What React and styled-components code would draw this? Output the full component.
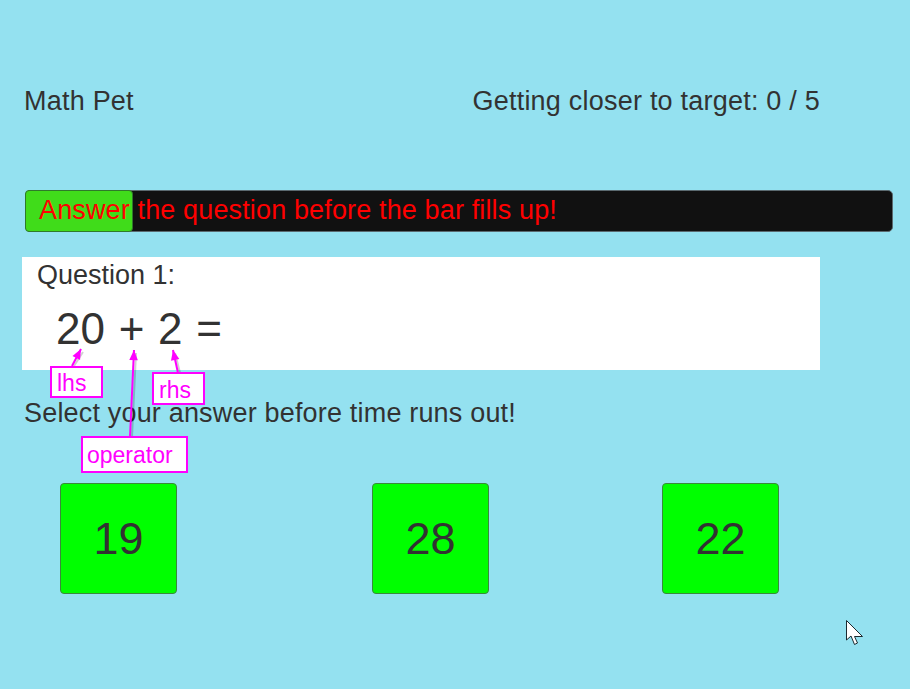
import styled, { createGlobalStyle } from 'styled-components'

const GlobalStyle = createGlobalStyle`
    html, body {
        margin: 0;
        padding: 0;
        background: #94E1F0;
    }
    body {
        font-family: "Liberation Sans", Arial, sans-serif;
        color: #323232;
        overflow: hidden;
    }
`

const Screen = styled.div`
    position: relative;
    width: 910px;
    height: 689px;
    padding-top: 88px;
    box-sizing: border-box;
    background: #94E1F0;
`

const Header = styled.div`
    width: 796px;
    margin-left: 24px;
    display: flex;
    justify-content: space-between;
    font-size: 27px;
    line-height: 27px;
    letter-spacing: 0.22px;
`

const TimerBar = styled.div`
    display: grid;
    width: 868px;
    height: 42px;
    margin: 75px 0 0 25px;
    box-sizing: border-box;
    background: #111111;
    border: 1px solid #5b6a70;
    border-radius: 5px;
`

const TimerFill = styled.div`
    grid-area: 1 / 1;
    box-sizing: border-box;
    background: #40DC1A;
    border: 1px solid #2f7a2a;
    border-radius: 4px;
    margin: -1px 0 0 -1px;
    height: 42px;
`

const TimerText = styled.div`
    grid-area: 1 / 1;
    z-index: 1;
    display: flex;
    align-items: center;
    padding-left: 13px;
    padding-bottom: 3px;
    font-size: 27px;
    letter-spacing: 0.14px;
    color: #FF0000;
    white-space: nowrap;
`

const Stage = styled.div`
    position: relative;
    margin-top: 25px;
`

const QuestionPanel = styled.div`
    width: 798px;
    height: 113px;
    margin-left: 22px;
    box-sizing: border-box;
    padding: 3px 0 0 15px;
    background: #FFFFFF;
`

const QuestionTitle = styled.div`
    font-size: 27px;
    line-height: 30px;
`

const Equation = styled.div`
    margin: 17px 0 0 19px;
    font-size: 44px;
    line-height: 44px;
    word-spacing: 1.5px;
`

const Prompt = styled.div`
    margin: 30px 0 0 24px;
    font-size: 27px;
    line-height: 27px;
    letter-spacing: 0.18px;
`

const AnswerRow = styled.div`
    display: flex;
    margin-top: 56px;
`

const AnswerButton = styled.button`
    width: 117px;
    height: 111px;
    margin-left: ${p => p.offset}px;
    padding: 0;
    box-sizing: border-box;
    background: #00FF00;
    border: 1px solid #3a8a3a;
    border-radius: 4px;
    font-family: "Liberation Sans", Arial, sans-serif;
    font-size: 45px;
    color: #323232;
    cursor: pointer;
`

const Annotations = styled.div`
    position: absolute;
    left: 0;
    top: 0;
    width: 910px;
    height: 230px;
    pointer-events: none;
`

const Label = styled.div`
    position: absolute;
    left: ${p => p.x}px;
    top: ${p => p.y}px;
    width: ${p => p.w}px;
    height: ${p => p.h}px;
    box-sizing: border-box;
    padding: ${p => p.pt}px 0 0 ${p => p.pl}px;
    background: #FFFFFF;
    border: 2px solid #FF00FF;
    color: #FF00FF;
    font-size: 23px;
    line-height: 23px;
`

const ArrowLayer = styled.svg`
    position: absolute;
    left: 0;
    top: 0;
`

const Cursor = styled.svg`
    position: absolute;
    left: 846px;
    top: 620px;
`

const arrows = [
    { x1: 72, y1: 109, x2: 81, y2: 92 },
    { x1: 130, y1: 180, x2: 134, y2: 93 },
    { x1: 178, y1: 116, x2: 173, y2: 93 },
]

const Arrow = ({ x1, y1, x2, y2 }) => {
    const ang = Math.atan2(y2 - y1, x2 - x1)
    const len = 11
    const spread = 0.4
    const ax = x2 - len * Math.cos(ang - spread)
    const ay = y2 - len * Math.sin(ang - spread)
    const bx = x2 - len * Math.cos(ang + spread)
    const by = y2 - len * Math.sin(ang + spread)
    return (
        <g>
            <line x1={x1 + 2} y1={y1} x2={x2 + 2} y2={y2 + 3} stroke="rgba(0,0,0,0.18)" strokeWidth="2" />
            <line x1={x1} y1={y1} x2={x2} y2={y2} stroke="#FF00FF" strokeWidth="2" />
            <polygon points={`${x2},${y2} ${ax},${ay} ${bx},${by}`} fill="#FF00FF" />
        </g>
    )
}

const App = () => {
    const progress = 108
    return (
        <Screen>
            <GlobalStyle />
            <Header>
                <span>Math Pet</span>
                <span>Getting closer to target: 0 / 5</span>
            </Header>
            <TimerBar>
                <TimerFill style={{ width: progress }} />
                <TimerText>Answer the question before the bar fills up!</TimerText>
            </TimerBar>
            <Stage>
                <QuestionPanel>
                    <QuestionTitle>Question 1:</QuestionTitle>
                    <Equation>20 + 2 =</Equation>
                </QuestionPanel>
                <Prompt>Select your answer before time runs out!</Prompt>
                <Annotations>
                    <ArrowLayer width="910" height="230">
                        {arrows.map((a, i) => <Arrow key={i} {...a} />)}
                    </ArrowLayer>
                    <Label x={50} y={109} w={53} h={32} pl={5} pt={4}>lhs</Label>
                    <Label x={152} y={115} w={53} h={33} pl={5} pt={5}>rhs</Label>
                    <Label x={81} y={179} w={107} h={37} pl={4} pt={6}>operator</Label>
                </Annotations>
            </Stage>
            <AnswerRow>
                <AnswerButton offset={60}>19</AnswerButton>
                <AnswerButton offset={195}>28</AnswerButton>
                <AnswerButton offset={173}>22</AnswerButton>
            </AnswerRow>
            <Cursor width="20" height="27" viewBox="0 0 20 27">
                <path d="M0.5 0.5 L0.5 20 L5 16 L8.5 24.5 L11.5 23 L8.5 16.5 L16.5 16.5 Z" fill="#FFFFFF" stroke="#1a2a30" strokeWidth="1" strokeLinejoin="miter" />
            </Cursor>
        </Screen>
    )
}

export default App
